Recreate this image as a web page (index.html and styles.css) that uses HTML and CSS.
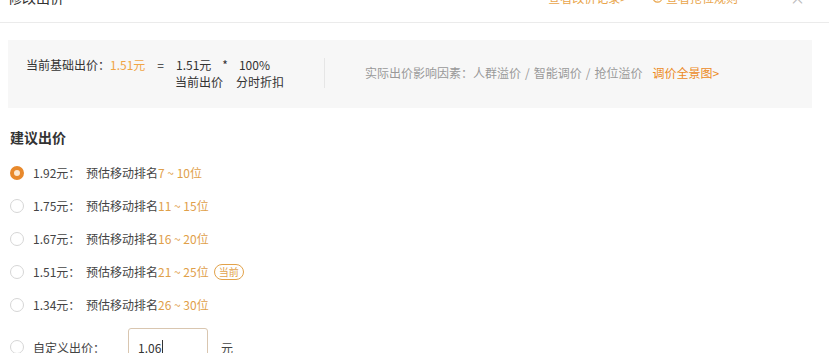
FILE: index.html
```html
<!DOCTYPE html>
<html lang="zh-CN">
<head>
<meta charset="utf-8">
<title>修改出价</title>
<link rel="stylesheet" href="styles.css">
</head>
<body>
<div class="page">
  <div class="header">
    <div class="title">修改出价</div>
    <div class="links">
      <a class="link">查看改价记录&gt;</a>
      <a class="link rule"><svg class="rule-icon" viewBox="0 0 12 12" width="11" height="11"><circle cx="6" cy="6" r="5" fill="none" stroke="#e9a54b" stroke-width="1.2"/><path d="M6 3.2v3.4M6 8.2v0.9" stroke="#e9a54b" stroke-width="1.2"/></svg>查看抢位规则</a>
      <span class="close">×</span>
    </div>
  </div>

  <div class="panel">
    <div class="formula">
      <div class="f-row">当前基础出价：<span class="accent">1.51元</span><span class="op eq">=</span><span>1.51元</span><span class="op mul">*</span><span>100%</span></div>
      <div class="f-row labels"><span>当前出价</span><span>分时折扣</span></div>
    </div>
    <div class="divider"></div>
    <div class="factors">实际出价影响因素：人群溢价<span class="slash">/</span>智能调价<span class="slash">/</span>抢位溢价<a class="overview">调价全景图&gt;</a></div>
  </div>

  <h3 class="section-title">建议出价</h3>
  <ul class="options">
    <li class="option"><span class="radio checked"></span><span class="price">1.92元：</span>预估移动排名<span class="range">7 ~ 10位</span></li>
    <li class="option"><span class="radio"></span><span class="price">1.75元：</span>预估移动排名<span class="range">11 ~ 15位</span></li>
    <li class="option"><span class="radio"></span><span class="price">1.67元：</span>预估移动排名<span class="range">16 ~ 20位</span></li>
    <li class="option"><span class="radio"></span><span class="price">1.51元：</span>预估移动排名<span class="range">21 ~ 25位</span><span class="badge">当前</span></li>
    <li class="option"><span class="radio"></span><span class="price">1.34元：</span>预估移动排名<span class="range">26 ~ 30位</span></li>
    <li class="option custom"><span class="radio"></span><span class="custom-label">自定义出价：</span><div class="input">1.06<span class="caret"></span></div><span class="unit">元</span></li>
  </ul>
</div>
</body>
</html>
```

FILE: styles.css
```css
html, body {
  margin: 0;
  padding: 0;
  background: #fff;
}
body {
  font-family: "Noto Sans CJK SC", "Liberation Sans", sans-serif;
  font-size: 12px;
  color: #333;
}
.page {
  width: 829px;
  height: 353px;
  overflow: hidden;
}
.header {
  box-sizing: border-box;
  height: 23px;
  border-bottom: 1px solid #ebebeb;
  display: flex;
  justify-content: space-between;
  align-items: flex-start;
  padding: 0 24px 0 8px;
}
.title {
  font-size: 14px;
  line-height: 14px;
  margin-top: -10px;
  color: #333;
}
.links {
  display: flex;
  align-items: flex-start;
  margin-top: -9px;
  line-height: 13px;
}
.link {
  color: #e9a54b;
  font-size: 12px;
}
.link:first-child {
  margin-right: 25px;
}
.rule {
  display: flex;
  align-items: center;
  gap: 3px;
  margin-right: 52px;
}
.close {
  color: #bbb;
  font-size: 15px;
  line-height: 13px;
}

.panel {
  margin: 17px 17px 0 8px;
  background: #f7f7f7;
  display: flex;
  align-items: center;
  padding: 16px 0 18px 18px;
}
.formula .f-row {
  line-height: 17px;
  white-space: nowrap;
  color: #333;
}
.accent {
  color: #f0a545;
}
.op.eq {
  margin: 0 12px;
}
.op.mul {
  margin: 0 11px;
}
.labels {
  padding-left: 149px;
  color: #aaa;
  display: flex;
  gap: 13px;
}
.divider {
  width: 1px;
  height: 30px;
  background: #e6e6e6;
  margin: 0 40px 0 40px;
}
.factors {
  color: #999;
  line-height: 17px;
  white-space: nowrap;
  margin-top: -2px;
}
.slash {
  margin: 0 4px;
}
.overview {
  color: #ec8a1e;
  margin-left: 10px;
}

.section-title {
  margin: 19px 0 0 10px;
  font-size: 14px;
  line-height: 20px;
  font-weight: bold;
  color: #333;
}
.options {
  list-style: none;
  margin: 9px 0 0 0;
  padding: 0 0 0 10px;
}
.option {
  height: 33px;
  display: flex;
  align-items: center;
  color: #444;
}
.radio {
  box-sizing: border-box;
  width: 14px;
  height: 14px;
  border-radius: 50%;
  border: 1px solid #d6d6d6;
  background: #fff;
  margin-right: 9px;
  flex: none;
}
.radio.checked {
  border: 4px solid #e8892c;
  background: #fde9d2;
}
.price {
  width: 53px;
}
.range {
  color: #dfa04a;
}
.badge {
  margin-left: 5px;
  box-sizing: border-box;
  height: 16px;
  padding: 0 4px;
  border: 1px solid #e2a24a;
  border-radius: 8px;
  color: #e2a24a;
  font-size: 10px;
  line-height: 14px;
}
.option.custom {
  height: 38px;
  margin-top: 7px;
}
.custom-label {
  width: 95px;
}
.input {
  box-sizing: border-box;
  width: 80px;
  height: 38px;
  border: 1px solid #d9c6b0;
  border-radius: 3px;
  padding-left: 9px;
  display: flex;
  align-items: center;
  color: #333;
}
.caret {
  width: 1px;
  height: 14px;
  background: #333;
  margin-left: 1px;
}
.unit {
  margin-left: 13px;
}
```
